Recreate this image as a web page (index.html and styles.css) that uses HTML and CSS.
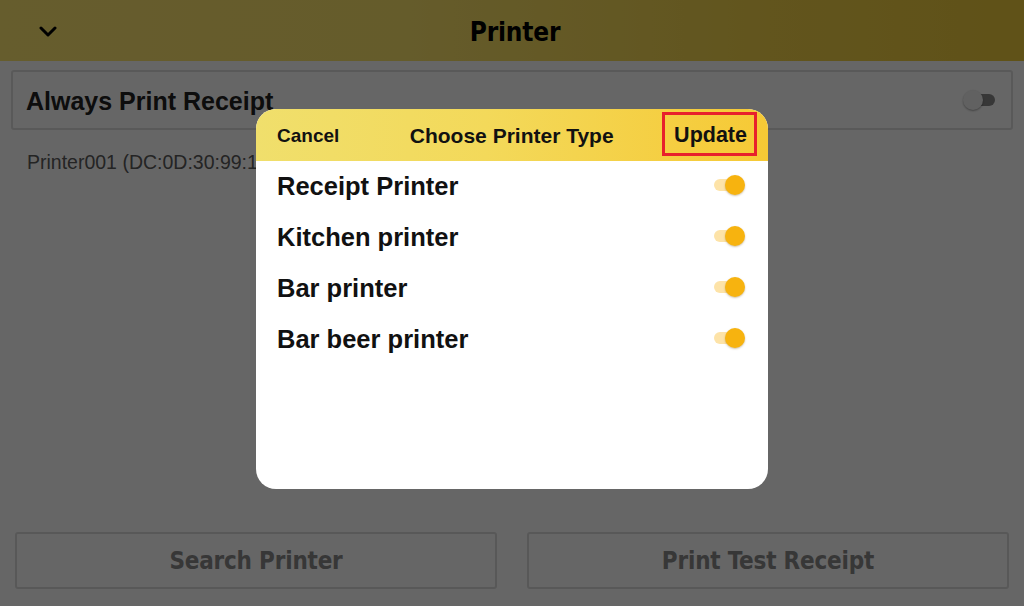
FILE: index.html
```html
<!DOCTYPE html>
<html>
<head>
<meta charset="utf-8">
<link rel="stylesheet" href="styles.css">
</head>
<body>
<div class="page">
  <header class="topbar">
    <span class="chev"><svg width="18" height="12" viewBox="0 0 18 12"><path d="M2 2 L9 9 L16 2" fill="none" stroke="#000" stroke-width="3" stroke-linecap="round" stroke-linejoin="round"/></svg></span>
    <h1 class="title">Printer</h1>
  </header>
  <div class="setting">
    <span class="setting-label">Always Print Receipt</span>
    <span class="switch off"><span class="track"></span><span class="thumb"></span></span>
  </div>
  <div class="device">Printer001 (DC:0D:30:99:1A:2B)</div>
  <div class="actions">
    <button class="btn">Search Printer</button>
    <button class="btn">Print Test Receipt</button>
  </div>
</div>
<div class="overlay"></div>
<div class="modal">
  <div class="modal-head">
    <span class="cancel">Cancel</span>
    <span class="modal-title">Choose Printer Type</span>
    <span class="update">Update</span>
  </div>
  <ul class="list">
    <li class="row"><span>Receipt Printer</span><span class="switch on"><span class="track"></span><span class="thumb"></span></span></li>
    <li class="row"><span>Kitchen printer</span><span class="switch on"><span class="track"></span><span class="thumb"></span></span></li>
    <li class="row"><span>Bar printer</span><span class="switch on"><span class="track"></span><span class="thumb"></span></span></li>
    <li class="row"><span>Bar beer printer</span><span class="switch on"><span class="track"></span><span class="thumb"></span></span></li>
  </ul>
</div>
</body>
</html>
```
FILE: styles.css
```css
* { box-sizing: border-box; }
html, body { margin: 0; padding: 0; }
body {
  width: 1024px;
  height: 606px;
  overflow: hidden;
  background: #fff;
  font-family: "Liberation Sans", Arial, sans-serif;
  position: relative;
}
.page {
  height: 606px;
  display: flex;
  flex-direction: column;
}
.topbar {
  height: 61px;
  flex: none;
  display: flex;
  align-items: center;
  justify-content: center;
  position: relative;
  background: linear-gradient(90deg, #ffe872 0%, #fde56c 40%, #f4d44a 75%, #f0cc3c 100%);
}
.chev {
  position: absolute;
  left: 39px;
  top: 26px;
  display: flex;
}
.title {
  margin: 2px 0 0 6px;
  font-family: "DejaVu Sans Condensed", "DejaVu Sans", sans-serif;
  font-weight: bold;
  font-size: 26px;
  color: #000;
  letter-spacing: -0.2px;
}
.setting {
  margin: 9px 11px 0 11px;
  height: 60px;
  border: 2px solid #dedede;
  border-radius: 3px;
  display: flex;
  align-items: center;
  justify-content: space-between;
  padding: 0 16px 0 13px;
}
.setting-label {
  font-weight: bold;
  font-size: 25px;
  color: #222;
  margin-top: 2px;
}
.device {
  margin: 21px 0 0 27px;
  font-size: 19.5px;
  color: #5a5a5a;
}
.actions {
  margin-top: auto;
  display: flex;
  gap: 30px;
  padding: 0 15px 17px 15px;
}
.btn {
  flex: 1;
  height: 57px;
  background: transparent;
  border: 2px solid #dcdcdc;
  border-radius: 3px;
  font-family: "DejaVu Sans Condensed", "DejaVu Sans", sans-serif;
  font-weight: bold;
  font-size: 24px;
  color: #8a8a8a;
  letter-spacing: -0.2px;
}
.switch {
  position: relative;
  width: 32px;
  height: 22px;
  display: inline-block;
  flex: none;
}
.switch .track {
  position: absolute;
  left: 0;
  top: 5px;
  width: 30px;
  height: 12px;
  border-radius: 6px;
}
.switch .thumb {
  position: absolute;
  top: 1px;
  width: 20px;
  height: 20px;
  border-radius: 50%;
}
.switch.off .track { background: #8a8a8a; left: 2px; }
.switch.off .thumb { left: 0; background: #f2f2f2; box-shadow: 0 1px 2px rgba(0,0,0,0.35); }
.switch.on .track { background: #fde3a8; }
.switch.on .thumb { left: 11px; background: #f7b30f; box-shadow: 0 1px 2px rgba(120,80,0,0.35); }
.overlay {
  position: absolute;
  inset: 0;
  background: rgba(0,0,0,0.6);
}
.modal {
  position: absolute;
  left: 256px;
  top: 109px;
  width: 512px;
  height: 380px;
  border-radius: 20px;
  overflow: hidden;
  background: #fff;
}
.modal-head {
  height: 52px;
  display: flex;
  align-items: center;
  justify-content: space-between;
  padding: 0 11px 0 21px;
  background: linear-gradient(90deg, #f0df6c 0%, #f3d95a 45%, #f6c935 100%);
  font-weight: bold;
  color: #111;
}
.cancel { font-size: 19px; margin-top: 1px; }
.modal-title { font-size: 21px; margin-left: 22px; margin-top: 1px; }
.update {
  font-size: 21.5px;
  border: 3px solid #e8202c;
  padding: 8px 7px 5px 9px;
  margin-top: -3px;
}
.list {
  list-style: none;
  margin: 0;
  padding: 0;
}
.row {
  height: 51px;
  display: flex;
  align-items: center;
  justify-content: space-between;
  padding: 0 22px 0 21px;
  font-weight: bold;
  font-size: 25.5px;
  color: #111;
}
.row .switch { margin-top: -4px; }
```
